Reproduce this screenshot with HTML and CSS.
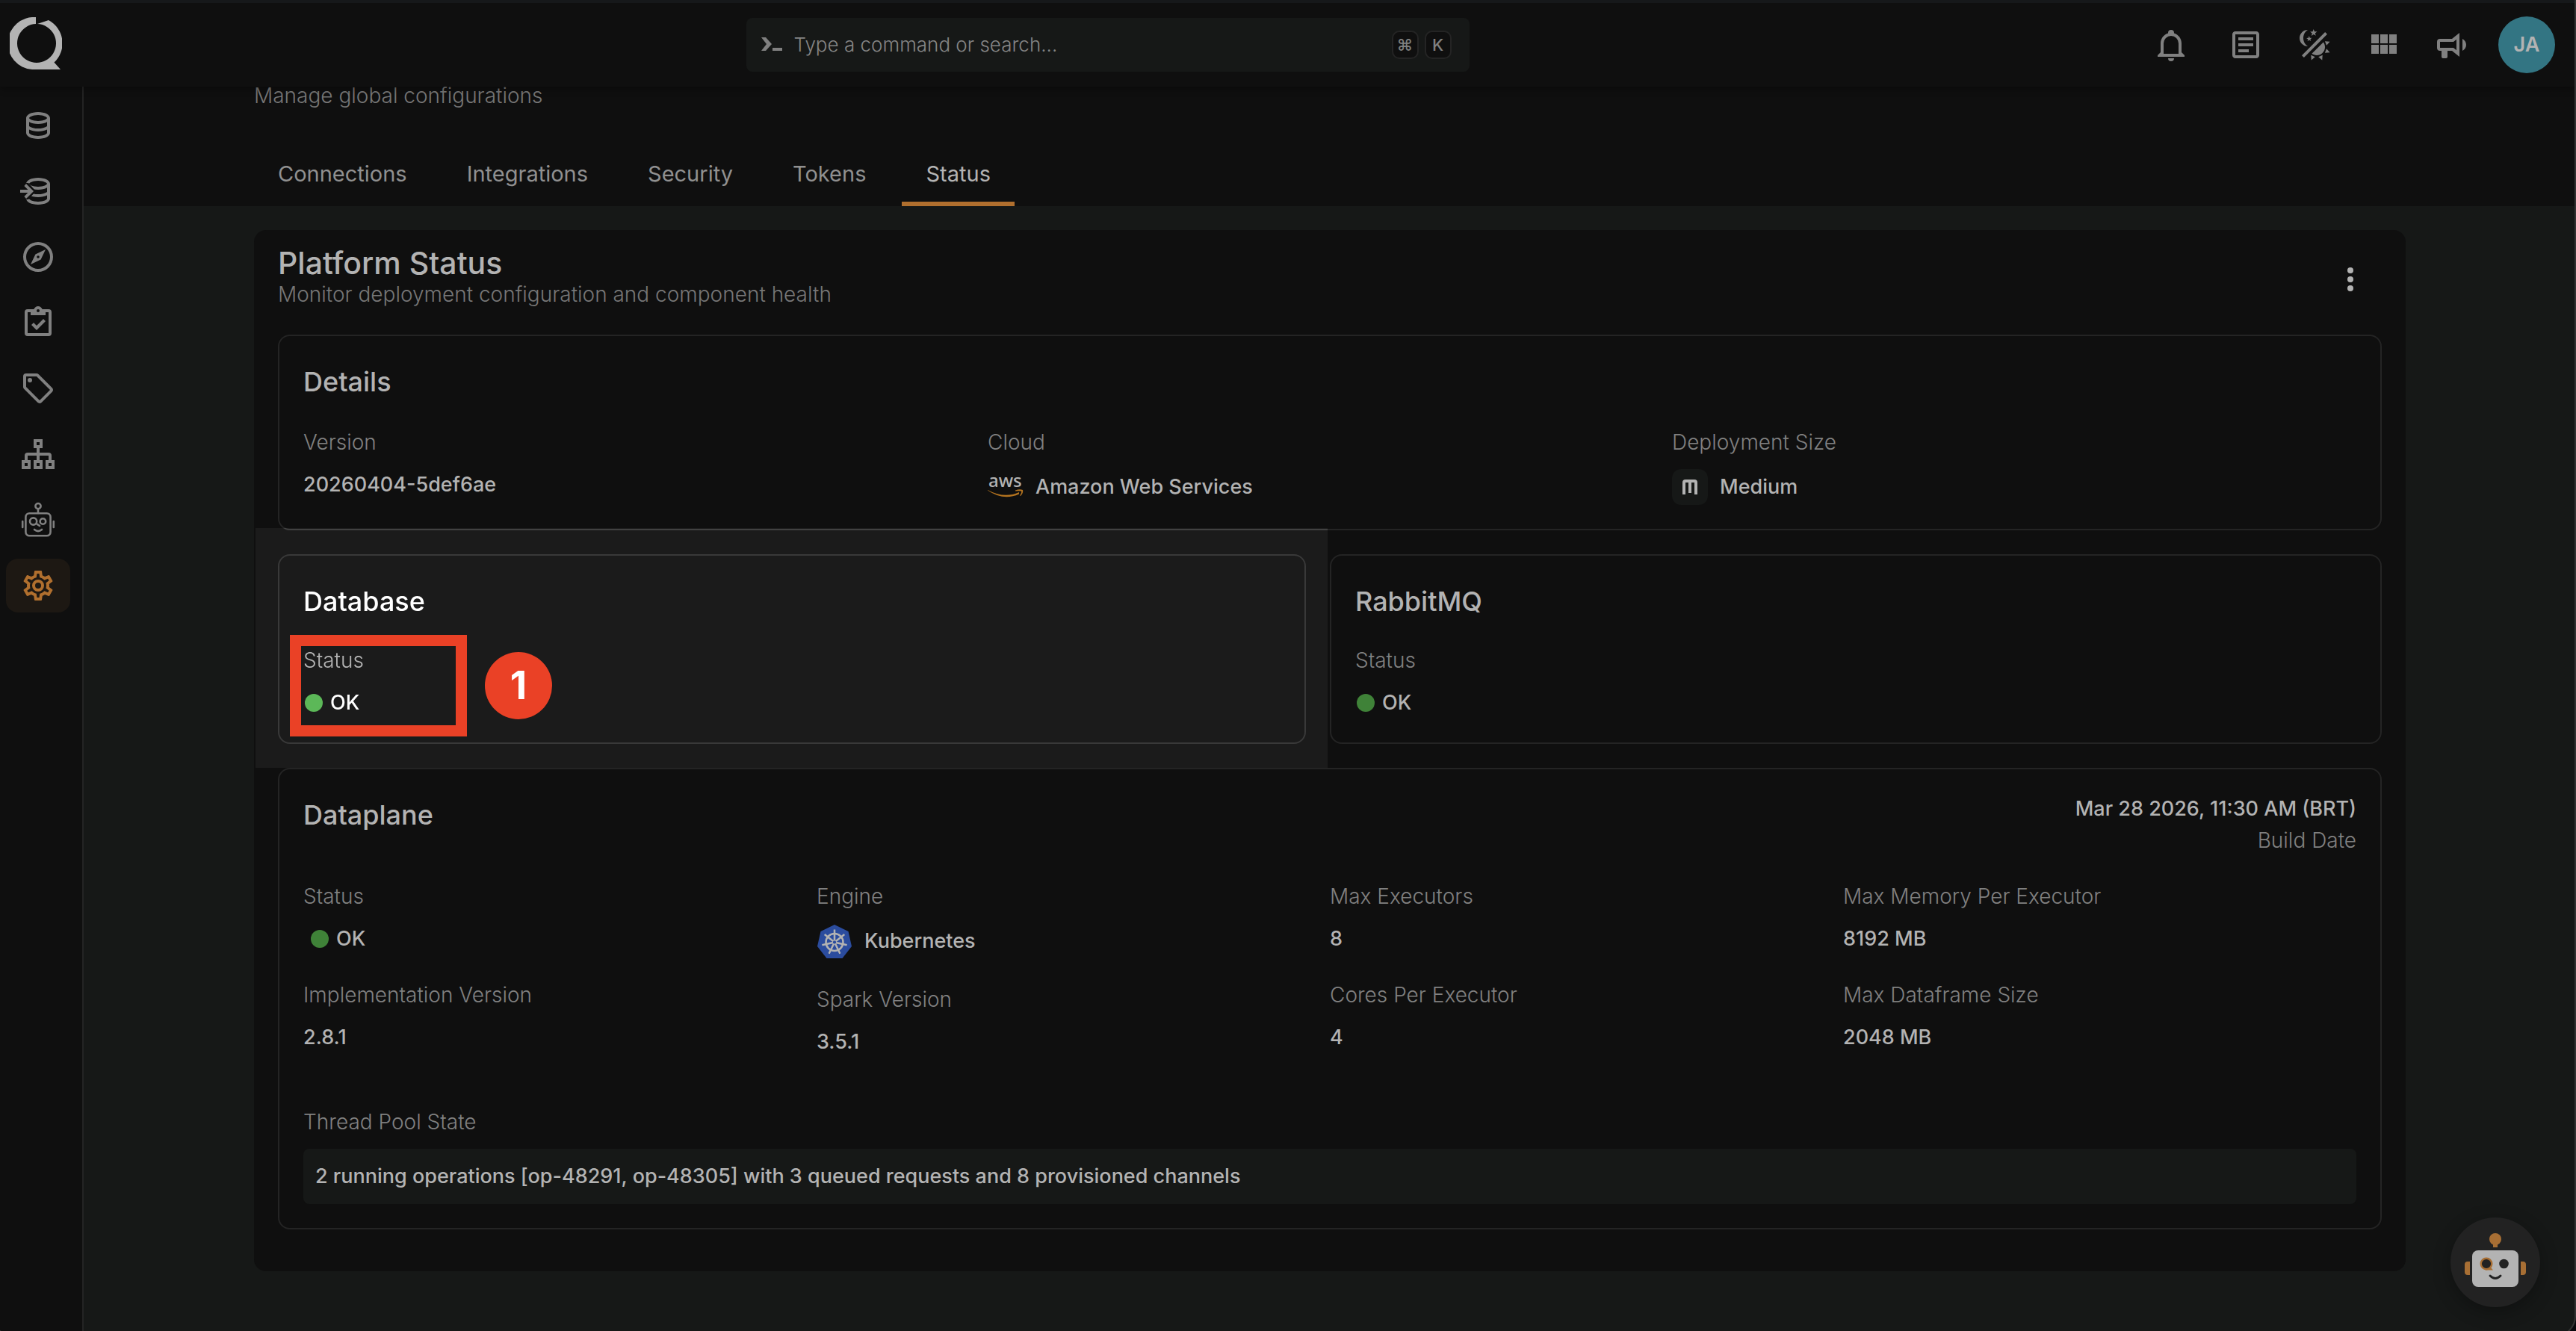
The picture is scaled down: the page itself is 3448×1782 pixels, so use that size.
FILE: index.html
```html
<!DOCTYPE html>
<html lang="en">
<head>
<meta charset="utf-8">
<meta name="viewport" content="width=device-width, initial-scale=1">
<title>Platform Status</title>
<link rel="stylesheet" href="styles.css">
</head>
<body>
<header class="topbar">
  <a class="logo" href="#" aria-label="Home">
    <svg viewBox="0 0 70 70"><path d="M35 0A35 35 0 0 0 30 70H68L59.500 60.500A35 35 0 0 0 52 4L37 9A26 26 0 1 1 35 9Z"/></svg>
  </a>
  <label class="search">
    <svg class="search-icon" viewBox="0 0 28 20" aria-hidden="true"><path d="M0 0H6L14 9L6 18H0L7 9ZM15 14H28V18H15Z"/></svg>
    <input class="search-input" type="text" placeholder="Type a command or search..." aria-label="Type a command or search">
    <kbd class="key">⌘</kbd><kbd class="key">K</kbd>
  </label>
  <div class="actions">
    <button class="icon-button bell" aria-label="Notifications"><svg class="icon" viewBox="0 0 24 24"><path d="M10,21H14A2,2 0 0,1 12,23A2,2 0 0,1 10,21M21,19V20H3V19L5,17V11C5,7.9 7.03,5.17 10,4.29C10,4.19 10,4.1 10,4A2,2 0 0,1 12,2A2,2 0 0,1 14,4C14,4.1 14,4.19 14,4.29C16.97,5.17 19,7.9 19,11V17L21,19M17,11A5,5 0 0,0 12,6A5,5 0 0,0 7,11V18H17V11Z"/></svg></button>
    <button class="icon-button" aria-label="Notes"><svg class="icon" viewBox="0 0 24 24"><path d="M5,3C3.89,3 3,3.89 3,5V19C3,20.11 3.89,21 5,21H19C20.11,21 21,20.11 21,19V5C21,3.89 20.11,3 19,3H5M5,5H19V19H5V5M7,7V9H17V7H7M7,11V13H17V11H7M7,15V17H14V15H7Z"/></svg></button>
    <button class="icon-button" aria-label="Theme"><svg class="icon" viewBox="0 0 24 24"><path d="M7.5,2C5.71,3.15 4.5,5.18 4.5,7.5C4.5,9.82 5.71,11.85 7.53,13C4.46,13 2,10.54 2,7.5A5.5,5.5 0 0,1 7.5,2M19.07,3.5L20.5,4.93L4.93,20.5L3.5,19.07L19.07,3.5M12.89,5.93L11.41,5L9.97,6L10.39,4.3L9,3.24L10.75,3.12L11.33,1.47L12,3.1L13.73,3.13L12.38,4.26L12.89,5.93M9.59,9.54L8.43,8.81L7.31,9.59L7.65,8.27L6.56,7.44L7.92,7.35L8.37,6.06L8.88,7.33L10.24,7.36L9.19,8.23L9.59,9.54M19,13.5A5.5,5.5 0 0,1 13.5,19C12.28,19 11.15,18.6 10.24,17.93L17.93,10.24C18.6,11.15 19,12.28 19,13.5M14.6,20.08L17.37,18.93L17.13,22.28L14.6,20.08M18.93,17.38L20.08,14.61L22.28,17.15L18.93,17.38M20.08,12.42L18.94,9.64L22.28,9.88L20.08,12.42M9.63,18.93L12.4,20.08L9.87,22.27L9.63,18.93Z"/></svg></button>
    <button class="icon-button" aria-label="Apps"><svg class="icon" viewBox="0 0 24 24"><path d="M16,5V11H21V5M10,11H15V5H10M16,18H21V12H16M10,18H15V12H10M4,18H9V12H4M4,11H9V5H4V11Z"/></svg></button>
    <button class="icon-button" aria-label="Announcements"><svg class="icon" viewBox="0 0 24 24"><path d="M12,8H4A2,2 0 0,0 2,10V14A2,2 0 0,0 4,16H5V20A1,1 0 0,0 6,21H8A1,1 0 0,0 9,20V16H12L17,20V4L12,8M15,15.6L13,14H4V10H13L15,8.4V15.6M21.5,12C21.5,13.71 20.54,15.26 19,16V8C20.53,8.75 21.5,10.3 21.5,12Z"/></svg></button>
    <button class="avatar">JA</button>
  </div>
</header>

<div class="shell">
  <nav class="sidebar" aria-label="Main">
    <a class="nav-item" href="#" aria-label="Catalog"><svg class="icon" viewBox="0 0 24 24"><path id="db" d="M12 3C7.58 3 4 4.79 4 7V17C4 19.21 7.59 21 12 21S20 19.21 20 17V7C20 4.79 16.42 3 12 3M18 17C18 17.5 15.87 19 12 19S6 17.5 6 17V14.77C7.61 15.55 9.72 16 12 16S16.39 15.55 18 14.77V17M18 12.45C16.7 13.4 14.42 14 12 14C9.58 14 7.3 13.4 6 12.45V9.64C7.47 10.47 9.61 11 12 11C14.39 11 16.53 10.47 18 9.64V12.45M12 9C8.13 9 6 7.5 6 7S8.13 5 12 5C15.87 5 18 6.5 18 7S15.87 9 12 9Z"/></svg></a>
    <a class="nav-item" href="#" aria-label="Sources"><svg class="icon" viewBox="0 0 24 24">
      <mask id="arrow-cut"><rect width="24" height="24" fill="#fff"/><path d="M0 6.500H5.500L10.500 12L5.500 17.500H0Z" fill="#000"/></mask>
      <use href="#db" mask="url(#arrow-cut)"/><path d="M0 11H5.200L2.700 8.500L4 7L9 12L4 17L2.700 15.500L5.200 13H0Z"/></svg></a>
    <a class="nav-item" href="#" aria-label="Explore"><svg class="icon" viewBox="0 0 24 24"><path d="M7,17L10.2,10.2L17,7L13.8,13.8L7,17M12,11.1A0.9,0.9 0 0,0 11.1,12A0.9,0.9 0 0,0 12,12.9A0.9,0.9 0 0,0 12.9,12A0.9,0.9 0 0,0 12,11.1M12,2A10,10 0 0,1 22,12A10,10 0 0,1 12,22A10,10 0 0,1 2,12A10,10 0 0,1 12,2M12,4A8,8 0 0,0 4,12A8,8 0 0,0 12,20A8,8 0 0,0 20,12A8,8 0 0,0 12,4Z"/></svg></a>
    <a class="nav-item" href="#" aria-label="Checks"><svg class="icon" viewBox="0 0 24 24"><path d="M19,3H14.82C14.4,1.84 13.3,1 12,1C10.7,1 9.6,1.84 9.18,3H5A2,2 0 0,0 3,5V19A2,2 0 0,0 5,21H19A2,2 0 0,0 21,19V5A2,2 0 0,0 19,3M12,3A1,1 0 0,1 13,4A1,1 0 0,1 12,5A1,1 0 0,1 11,4A1,1 0 0,1 12,3M7,7H17V5H19V19H5V5H7V7M7.5,13.5L9,12L11,14L15.5,9.5L17,11L11,17L7.5,13.5Z"/></svg></a>
    <a class="nav-item" href="#" aria-label="Tags"><svg class="icon" viewBox="0 0 24 24"><path d="M21.41 11.58L12.41 2.58A2 2 0 0 0 11 2H4A2 2 0 0 0 2 4V11A2 2 0 0 0 2.59 12.42L11.59 21.42A2 2 0 0 0 13 22A2 2 0 0 0 14.41 21.41L21.41 14.41A2 2 0 0 0 22 13A2 2 0 0 0 21.41 11.58M13 20L4 11V4H11L20 13M6.500 5A1.500 1.500 0 1 1 5 6.500A1.500 1.500 0 0 1 6.500 5Z"/></svg></a>
    <a class="nav-item" href="#" aria-label="Lineage"><svg class="icon line" viewBox="0 0 24 24" stroke-width="2"><path d="M10 3H14V7H10ZM2 17H6V21H2ZM10 17H14V21H10ZM18 17H22V21H18ZM12 8V16M4 16V13Q4 12 5 12H19Q20 12 20 13V16"/></svg></a>
    <a class="nav-item" href="#" aria-label="Agent"><svg class="icon line" viewBox="0 0 24 24" stroke-width="1.300" stroke-linecap="round"><circle cx="12" cy="2.800" r="1.800"/><path d="M12 4.600V7.500M1.600 13V17M22.400 13V17M13 16L11.300 14.800M9.500 18.500Q12 20.600 14.500 18.500"/><rect x="3.700" y="7.600" width="16.600" height="15" rx="2.500"/><circle cx="8.800" cy="13" r="2.300"/><circle cx="15.200" cy="13" r="1.900"/></svg></a>
    <a class="nav-item active" href="#" aria-label="Settings" aria-current="page"><svg class="icon" viewBox="0 0 24 24"><path d="M12,8A4,4 0 0,1 16,12A4,4 0 0,1 12,16A4,4 0 0,1 8,12A4,4 0 0,1 12,8M12,10A2,2 0 0,0 10,12A2,2 0 0,0 12,14A2,2 0 0,0 14,12A2,2 0 0,0 12,10M10,22C9.75,22 9.54,21.82 9.5,21.58L9.13,18.93C8.5,18.68 7.96,18.34 7.44,17.94L4.95,18.95C4.73,19.03 4.46,18.95 4.34,18.73L2.34,15.27C2.21,15.05 2.27,14.78 2.46,14.63L4.57,12.97L4.5,12L4.57,11L2.46,9.37C2.27,9.22 2.21,8.95 2.34,8.73L4.34,5.27C4.46,5.05 4.73,4.96 4.95,5.05L7.44,6.05C7.96,5.66 8.5,5.32 9.13,5.07L9.5,2.42C9.54,2.18 9.75,2 10,2H14C14.25,2 14.46,2.18 14.5,2.42L14.87,5.07C15.5,5.32 16.04,5.66 16.56,6.05L19.05,5.05C19.27,4.96 19.54,5.05 19.66,5.27L21.66,8.73C21.79,8.95 21.73,9.22 21.54,9.37L19.43,11L19.5,12L19.43,13L21.54,14.63C21.73,14.78 21.79,15.05 21.66,15.27L19.66,18.73C19.54,18.95 19.27,19.04 19.05,18.95L16.56,17.95C16.04,18.34 15.5,18.68 14.87,18.93L14.5,21.58C14.46,21.82 14.25,22 14,22H10M11.25,4L10.88,6.61C9.68,6.86 8.62,7.5 7.85,8.39L5.44,7.35L4.69,8.65L6.8,10.2C6.4,11.37 6.4,12.64 6.8,13.8L4.68,15.36L5.43,16.66L7.86,15.62C8.63,16.5 9.68,17.14 10.87,17.38L11.24,20H12.76L13.13,17.39C14.32,17.14 15.37,16.5 16.14,15.62L18.57,16.66L19.32,15.36L17.2,13.81C17.6,12.64 17.6,11.37 17.2,10.2L19.31,8.65L18.56,7.35L16.15,8.39C15.38,7.5 14.32,6.86 13.12,6.62L12.75,4H11.25Z"/></svg></a>
  </nav>

  <div class="content">
    <div class="page-head">
      <div class="container">
        <p class="page-intro">Manage global configurations</p>
        <nav class="tabs" aria-label="Settings sections">
          <a class="tab" href="#">Connections</a>
          <a class="tab" href="#">Integrations</a>
          <a class="tab" href="#">Security</a>
          <a class="tab" href="#">Tokens</a>
          <a class="tab selected" href="#" aria-current="page">Status</a>
        </nav>
      </div>
    </div>

    <main class="container panel">
      <div class="panel-head">
        <div>
          <h1 class="panel-title">Platform Status</h1>
          <p class="panel-sub">Monitor deployment configuration and component health</p>
        </div>
        <button class="kebab" aria-label="More options"><svg viewBox="0 0 40 40"><circle cx="20" cy="8" r="4"/><circle cx="20" cy="20" r="4"/><circle cx="20" cy="32" r="4"/></svg></button>
      </div>

      <section class="card">
        <h2 class="card-title">Details</h2>
        <dl class="grid three">
          <div class="field"><dt>Version</dt><dd>20260404-5def6ae</dd></div>
          <div class="field"><dt>Cloud</dt><dd class="with-logo">
            <svg class="brand" viewBox="0 0 48 48" aria-hidden="true"><text class="aws-word" x="1" y="24">aws</text><path class="aws-smile" d="M0 28Q22 40 42 31L42 33.500Q21 43 0 28.500ZM37 28.500Q43 26.500 47 28Q48 32 44 36L43 35.500Q46 31 45 29.500Q42 29 37 29.500Z"/></svg>
            Amazon Web Services</dd></div>
          <div class="field"><dt>Deployment Size</dt><dd class="with-logo">
            <svg class="brand size-badge" viewBox="0 0 48 48" aria-hidden="true"><path d="M16 34V18Q16 16 18 16H30Q32 16 32 18V34M24 16V32"/></svg>
            Medium</dd></div>
        </dl>
      </section>

      <div class="services">
        <div class="focus-cell">
          <div class="spotlight"></div>
          <section class="card service focused">
            <h2 class="card-title">Database</h2>
            <dl class="field"><dt>Status</dt><dd class="state"><span class="dot"></span>OK</dd></dl>
            <div class="marker-box"></div>
            <div class="marker-step">1</div>
          </section>
        </div>
        <section class="card service">
          <h2 class="card-title">RabbitMQ</h2>
          <dl class="field"><dt>Status</dt><dd class="state"><span class="dot"></span>OK</dd></dl>
        </section>
      </div>

      <section class="card">
        <div class="dataplane-head">
          <h2 class="card-title">Dataplane</h2>
          <div class="build"><time class="build-time">Mar 28 2026, 11:30 AM (BRT)</time><span class="build-label">Build Date</span></div>
        </div>
        <div class="grid four">
          <dl class="column">
            <div class="field"><dt>Status</dt><dd class="state inset"><span class="dot"></span>OK</dd></div>
            <div class="field"><dt>Implementation Version</dt><dd>2.8.1</dd></div>
          </dl>
          <dl class="column">
            <div class="field"><dt>Engine</dt><dd class="with-logo">
              <svg class="brand" viewBox="0 0 48 48" aria-hidden="true"><path class="k8s-body" d="M24 2L42.500 11L47 31L34.500 47H13.500L1 31L5.500 11Z"/><g class="k8s-wheel"><circle cx="24" cy="25.500" r="11.500"/><path d="M24 23.500V8.500M25.600 24.200L37.300 14.900M26 26L40.600 29.300M24.900 27.300L31.400 40.800M23.100 27.300L16.600 40.800M22 26L7.400 29.300M22.400 24.200L10.700 14.900"/></g></svg>
              Kubernetes</dd></div>
            <div class="field"><dt>Spark Version</dt><dd>3.5.1</dd></div>
          </dl>
          <dl class="column">
            <div class="field"><dt>Max Executors</dt><dd>8</dd></div>
            <div class="field"><dt>Cores Per Executor</dt><dd>4</dd></div>
          </dl>
          <dl class="column">
            <div class="field"><dt>Max Memory Per Executor</dt><dd>8192 MB</dd></div>
            <div class="field"><dt>Max Dataframe Size</dt><dd>2048 MB</dd></div>
          </dl>
        </div>
        <dl class="field pool"><dt>Thread Pool State</dt><dd class="pool-state">2 running operations [op-48291, op-48305] with 3 queued requests and 8 provisioned channels</dd></dl>
      </section>
    </main>
  </div>
</div>

<button class="assistant" aria-label="Open assistant">
  <svg viewBox="0 0 120 120">
    <g fill="#a86f34"><circle cx="60" cy="29" r="8"/><rect x="57" y="35" width="6" height="5"/><path d="M26 59H23Q19 59 19 63V73Q19 77 23 77H26ZM94 59H97Q101 59 101 63V73Q101 77 97 77H94Z"/></g>
    <rect x="29" y="44" width="62" height="49" rx="8" fill="#b3b3b3"/>
    <circle cx="48" cy="62" r="7.300" fill="#222" stroke="#a86f34" stroke-width="2.400"/><path d="M46 70.500L54 67L57 70.500Z" fill="#a86f34"/>
    <circle cx="71.500" cy="62" r="6.300" fill="#222"/>
    <path d="M53 78Q60 85 67 78" fill="none" stroke="#222" stroke-width="3" stroke-linecap="round"/>
  </svg>
</button>
<div class="window-frame"></div>
</body>
</html>
```
FILE: styles.css
```css
:root {
  --surface: #0f0f0f;
  --canvas: #161817;
  --line: #242424;
  --text: #b3b3b3;
  --muted: #808080;
  --accent: #b06f2e;
}

* { box-sizing: border-box; }

body {
  margin: 0;
  min-height: 100vh;
  display: flex;
  flex-direction: column;
  background: var(--canvas);
  color: var(--text);
  font: 400 28px/42px Inter, "Liberation Sans", sans-serif;
}

h1, h2, p, dl, dd { margin: 0; }
a { color: inherit; text-decoration: none; }
svg { display: block; fill: currentColor; }

button {
  padding: 0;
  border: 0;
  background: none;
  color: inherit;
  font: inherit;
  cursor: pointer;
}

.icon { width: 48px; height: 48px; }
.icon.line { fill: none; stroke: currentColor; }

/* Top bar */
.topbar {
  position: relative;
  z-index: 1;
  display: flex;
  align-items: center;
  justify-content: space-between;
  height: 116px;
  padding: 0 28px 0 13px;
  border-top: 4px solid #16181a;
  background: var(--surface);
  box-shadow: 0 2px 10px rgba(0, 0, 0, .4);
}

.logo { width: 70px; height: 70px; margin-bottom: 4px; }

.search {
  display: flex;
  align-items: center;
  gap: 8px;
  flex: 0 1 968px;
  height: 72px;
  padding: 0 24px 0 20px;
  border-radius: 8px;
  background: var(--canvas);
  color: var(--muted);
}

.search-icon { width: 28px; height: 20px; margin-right: 8px; }

.search-input {
  flex: 1;
  min-width: 0;
  padding: 0;
  border: 0;
  outline: 0;
  background: none;
  color: inherit;
  font: 300 26px/40px Inter, sans-serif;
}

.search-input::placeholder { color: #858585; opacity: 1; }

.key {
  width: 36px;
  height: 38px;
  border: 2px solid var(--line);
  border-radius: 10px;
  background: var(--surface);
  text-align: center;
  font: 500 22px/34px Inter, "DejaVu Sans", sans-serif;
}

.actions { display: flex; align-items: center; gap: 44px; color: var(--muted); }
.bell { margin-right: 8px; }

.avatar {
  width: 76px;
  height: 76px;
  margin-left: -6px;
  border-radius: 50%;
  background: #337583;
  color: var(--text);
  font-size: 27px;
  font-weight: 600;
}

/* Sidebar and content */
.shell { flex: 1; display: flex; }

.sidebar {
  display: flex;
  flex-direction: column;
  flex: none;
  gap: 16px;
  width: 112px;
  padding: 16px 8px;
  border-right: 2px solid var(--line);
  background: var(--surface);
  color: var(--muted);
}

.nav-item {
  display: grid;
  place-items: center;
  width: 86px;
  height: 72px;
  border-radius: 16px;
}

.nav-item.active { background: #1d1813; color: var(--accent); }

.content { flex: 1; min-width: 0; padding-bottom: 80px; }
.container { width: calc(100% - 64px); max-width: 2880px; margin: 0 auto; }
.page-head { background: var(--surface); }
.page-intro { color: #767676; font-weight: 300; line-height: 24px; }

.tabs { display: flex; gap: 16px; height: 80px; margin-top: 56px; }

.tab {
  display: flex;
  align-items: center;
  padding: 0 32px;
  border-bottom: 6px solid transparent;
  color: #909090;
  font-size: 29px;
}

.tab.selected { border-color: var(--accent); color: var(--text); }

/* Panel */
.panel {
  margin-top: 32px;
  padding: 20px 32px 56px;
  border-radius: 16px;
  background: var(--surface);
}

.panel-head {
  display: flex;
  align-items: center;
  justify-content: space-between;
  margin-bottom: 36px;
}

.panel-title { font-size: 41px; font-weight: 500; line-height: 48px; }
.panel-sub { color: #767676; font-weight: 300; line-height: 36px; }
.kebab { width: 40px; height: 40px; margin: 8px 22px 0 0; }

.card {
  padding: 32px;
  border: 2px solid var(--line);
  border-radius: 16px;
}

.card-title {
  margin-bottom: 32px;
  font-size: 36px;
  font-weight: 500;
  line-height: 58px;
}

.service .card-title { margin-bottom: 30px; }

.grid { display: grid; }
.three { grid-template-columns: repeat(3, 1fr); }
.four { grid-template-columns: repeat(4, 1fr); }
.column { display: flex; flex-direction: column; gap: 34px; }
.field { display: flex; flex-direction: column; gap: 16px; }

dt { color: var(--muted); font-weight: 300; line-height: 40px; }
dd { font-size: 27px; font-weight: 500; }

.with-logo { display: flex; align-items: center; gap: 16px; }
.brand { width: 48px; height: 48px; overflow: visible; }
.aws-word { font: 500 24px "Noto Sans", sans-serif; }
.aws-smile { fill: #b3731f; }

.size-badge {
  border-radius: 12px;
  background: var(--canvas);
  fill: none;
  stroke: currentColor;
  stroke-width: 4px;
}

.k8s-body { fill: #2b4c9e; }
.k8s-wheel { fill: none; stroke: currentColor; stroke-width: 2.500px; }

.services {
  display: grid;
  grid-template-columns: 1fr 1fr;
  margin: 32px 0;
}

.state { display: flex; align-items: center; gap: 10px; padding-left: 2px; }
.state.inset { padding-left: 10px; }
.dot { width: 24px; height: 24px; border-radius: 50%; background: #3f8238; }

/* Highlighted service */
.focus-cell { position: relative; margin-right: 32px; }

.spotlight {
  position: absolute;
  inset: -35px -30px -32px;
  backdrop-filter: brightness(1.8);
}

.focused { position: relative; border-color: #393939; color: #fff; }
.focused dt { color: var(--text); }
.focused .dot { background: #5cb858; }

.marker-box {
  position: absolute;
  top: 106px;
  left: 14px;
  width: 237px;
  height: 136px;
  border: 15px solid #ea4126;
}

.marker-step {
  position: absolute;
  top: 129px;
  left: 275px;
  width: 90px;
  border-radius: 50%;
  background: #ea4126;
  text-align: center;
  font-size: 52px;
  font-weight: 700;
  line-height: 90px;
}

/* Dataplane */
.dataplane-head {
  display: flex;
  justify-content: space-between;
  margin-bottom: 34px;
}

.dataplane-head .card-title { margin: 0; }
.build { display: flex; flex-direction: column; text-align: right; }
.build-time { font-size: 27px; font-weight: 500; }
.build-label { color: var(--muted); font-weight: 300; }
.pool { margin-top: 66px; }

.pool-state {
  padding: 16px;
  border-radius: 8px;
  background: var(--canvas);
}

/* Floating assistant button and window edge */
.assistant {
  position: fixed;
  right: 48px;
  bottom: 32px;
  width: 120px;
  height: 120px;
  border-radius: 50%;
  background: #222;
  box-shadow: 0 6px 24px rgba(0, 0, 0, .3);
}

.window-frame {
  position: fixed;
  z-index: 2;
  inset: -40px 0 -8px -10px;
  border: 2px solid #333;
  border-radius: 28px;
  box-shadow: 0 0 0 40px #08080c;
  pointer-events: none;
}
```
